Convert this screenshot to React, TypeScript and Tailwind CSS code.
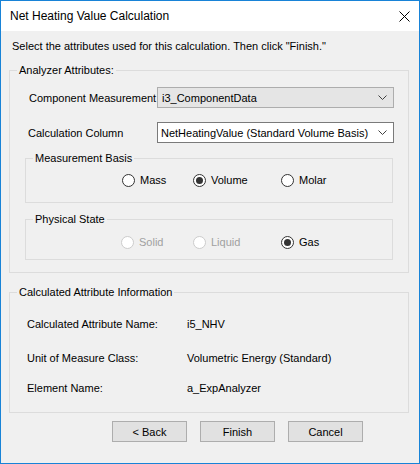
function Chevron() {
  return (
    <svg width="9" height="5" viewBox="0 0 9 5" className="shrink-0">
      <path d="M0.5 0.5 L4.5 4.5 L8.5 0.5" fill="none" stroke="#404040" strokeWidth="1" />
    </svg>
  );
}

function Combo({ value, readOnly }: { value: string; readOnly?: boolean }) {
  return (
    <div
      className={
        readOnly
          ? "flex h-[21px] w-[237px] items-center justify-between border border-[#adadad] bg-[#e5e5e5] pl-[4px] pr-[6px]"
          : "flex h-[21px] w-[237px] items-center justify-between border border-[#7a7a7a] bg-white pl-[3px] pr-[6px]"
      }
    >
      <span className="whitespace-nowrap">{value}</span>
      <Chevron />
    </div>
  );
}

function Radio({ label, checked, disabled, width }: { label: string; checked?: boolean; disabled?: boolean; width: string }) {
  return (
    <div className={`flex items-center gap-[5px] ${width}`}>
      <span
        className={
          disabled
            ? "flex h-[13px] w-[13px] items-center justify-center rounded-full border border-[#cccccc] bg-white"
            : "flex h-[13px] w-[13px] items-center justify-center rounded-full border border-[#333333] bg-white"
        }
      >
        {checked && <span className="h-[7px] w-[7px] rounded-full bg-[#333333]" />}
      </span>
      <span className={disabled ? "text-[#a0a0a0]" : "text-black"}>{label}</span>
    </div>
  );
}

function Group({ title, className, children }: { title: string; className: string; children: React.ReactNode }) {
  return (
    <div className={`relative border border-[#dcdcdc] ${className}`}>
      <span className="absolute -top-[8px] left-[7px] whitespace-nowrap bg-[#f0f0f0] px-[2px] leading-[14px]">{title}</span>
      {children}
    </div>
  );
}

export default function App() {
  return (
    <div
      className="flex h-[464px] w-[420px] flex-col border border-[#1883d7] bg-[#f0f0f0] text-[11px] leading-[14px] text-black"
      style={{ fontFamily: '"Liberation Sans", Arial, sans-serif' }}
    >
      <div className="flex h-[30px] shrink-0 items-center justify-between bg-white pl-[9px] pr-[9px]">
        <span className="text-[12px]">Net Heating Value Calculation</span>
        <svg width="11" height="11" viewBox="0 0 11 11">
          <path d="M0.5 0.5 L10.5 10.5 M10.5 0.5 L0.5 10.5" stroke="#000" strokeWidth="1" />
        </svg>
      </div>

      <div className="flex flex-col px-[8px]">
        <p className="mt-[8px] whitespace-nowrap pl-[3px]">Select the attributes used for this calculation. Then click "Finish."</p>

        <Group title="Analyzer Attributes:" className="mt-[17px] h-[203px] w-[400px] pt-[16px]">
          <div className="flex items-center">
            <span className="w-[147px] whitespace-nowrap pl-[19px]">Component Measurement</span>
            <Combo value="i3_ComponentData" readOnly />
          </div>
          <div className="mt-[14px] flex items-center">
            <span className="w-[147px] whitespace-nowrap pl-[18px]">Calculation Column</span>
            <Combo value="NetHeatingValue (Standard Volume Basis)" />
          </div>

          <Group title="Measurement Basis" className="ml-[15px] mt-[15px] h-[45px] w-[368px] pt-[14px]">
            <div className="flex pl-[96px]">
              <Radio label="Mass" width="w-[71px]" />
              <Radio label="Volume" checked width="w-[88px]" />
              <Radio label="Molar" width="w-[80px]" />
            </div>
          </Group>

          <Group title="Physical State" className="ml-[15px] mt-[16px] h-[41px] w-[368px] pt-[15px]">
            <div className="flex pl-[95px]">
              <Radio label="Solid" disabled width="w-[72px]" />
              <Radio label="Liquid" disabled width="w-[88px]" />
              <Radio label="Gas" checked width="w-[80px]" />
            </div>
          </Group>
        </Group>

        <Group title="Calculated Attribute Information" className="mt-[19px] h-[121px] w-[400px] pt-[24px]">
          <div className="flex pl-[17px]">
            <span className="w-[160px]">Calculated Attribute Name:</span>
            <span>i5_NHV</span>
          </div>
          <div className="mt-[20px] flex pl-[17px]">
            <span className="w-[160px]">Unit of Measure Class:</span>
            <span>Volumetric Energy (Standard)</span>
          </div>
          <div className="mt-[16px] flex pl-[17px]">
            <span className="w-[160px]">Element Name:</span>
            <span>a_ExpAnalyzer</span>
          </div>
        </Group>

        <div className="mt-[8px] flex gap-[13px] pl-[103px]">
          {["< Back", "Finish", "Cancel"].map((b) => (
            <button
              key={b}
              className="flex h-[21px] w-[75px] items-center justify-center border border-[#adadad] bg-[#e1e1e1]"
            >
              {b}
            </button>
          ))}
        </div>
      </div>
    </div>
  );
}
